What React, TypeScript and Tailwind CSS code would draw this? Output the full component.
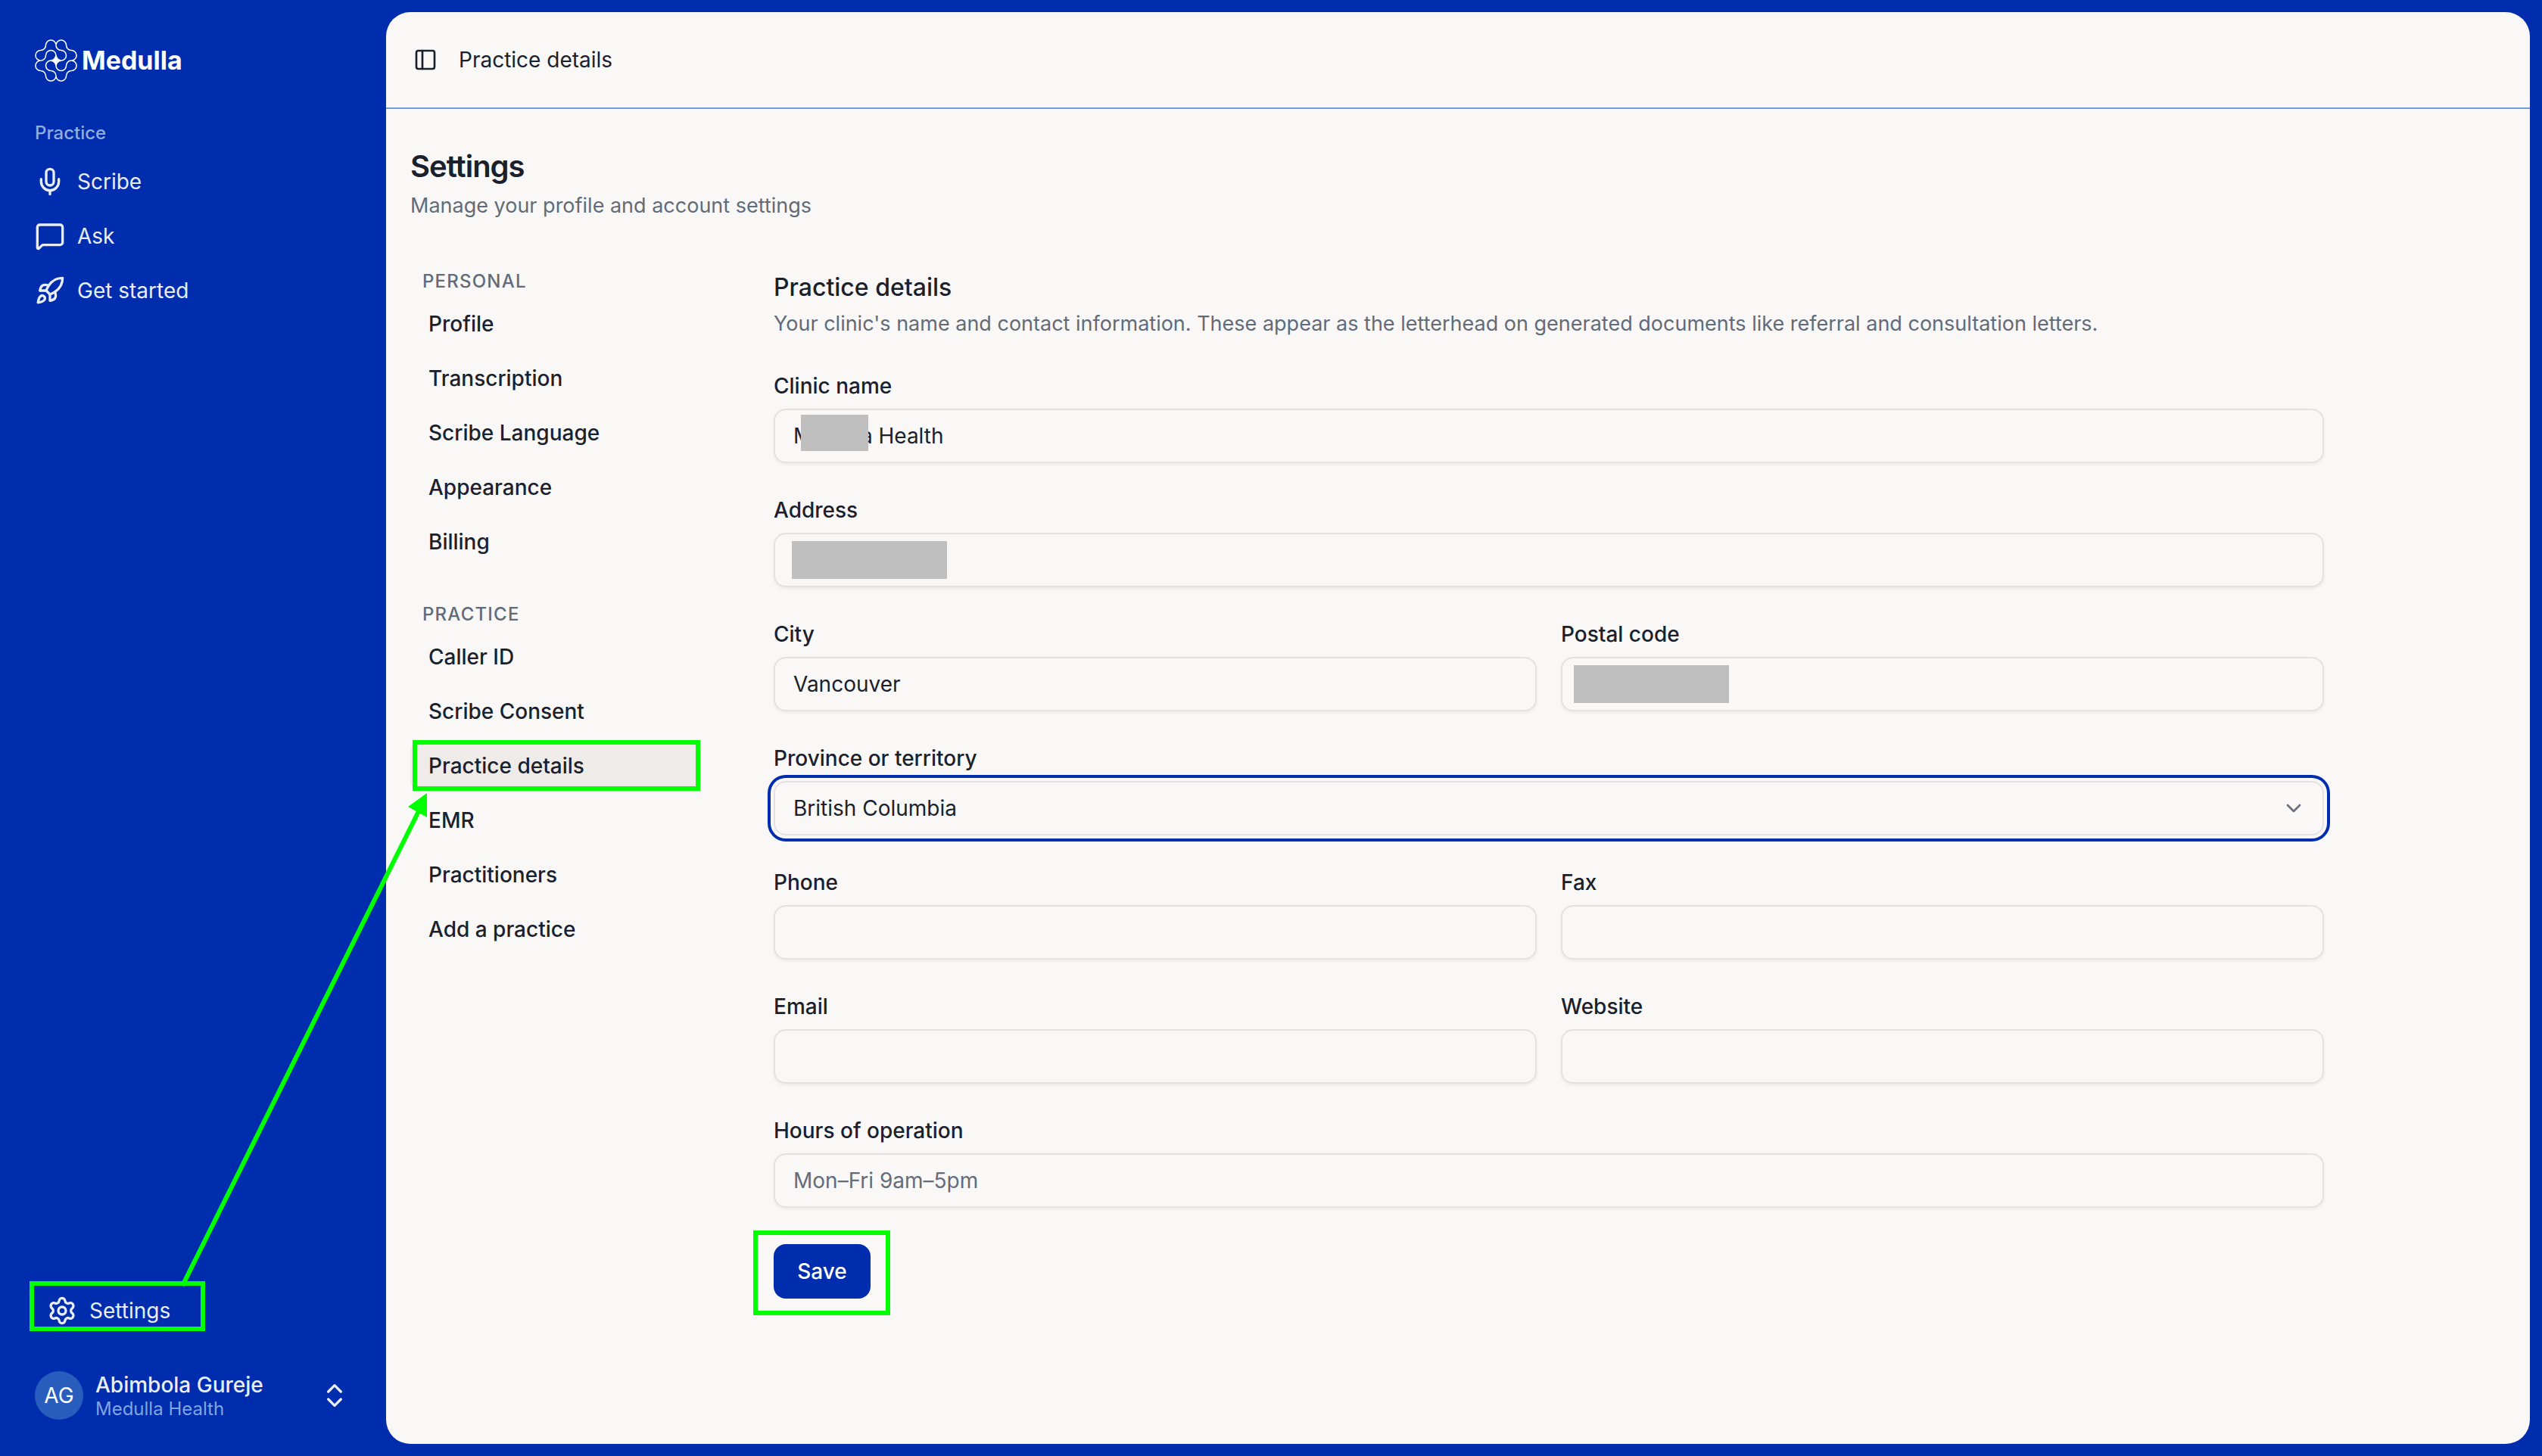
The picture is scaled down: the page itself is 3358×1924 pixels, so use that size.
import type { ReactNode } from 'react';
import {
  ChevronDown,
  ChevronsUpDown,
  MessageSquare,
  Mic,
  PanelLeft,
  Rocket,
  Settings,
} from 'lucide-react';

const mainLinks = [
  { label: 'Scribe', icon: Mic },
  { label: 'Ask', icon: MessageSquare },
  { label: 'Get started', icon: Rocket },
];

const settingsGroups = [
  {
    title: 'Personal',
    items: ['Profile', 'Transcription', 'Scribe Language', 'Appearance', 'Billing'],
  },
  {
    title: 'Practice',
    items: [
      'Caller ID',
      'Scribe Consent',
      'Practice details',
      'EMR',
      'Practitioners',
      'Add a practice',
    ],
  },
];

function LogoMark() {
  return (
    <svg viewBox="-1 -1 58 58" className="size-14 shrink-0" fill="none" stroke="white" strokeWidth="1.6" aria-hidden="true">
      <path d="M14 7a7 7 0 0 1 14 0a7 7 0 0 1 14 0a7 7 0 0 0 7 7a7 7 0 0 1 0 14a7 7 0 0 1 0 14a7 7 0 0 0 -7 7a7 7 0 0 1 -14 0a7 7 0 0 1 -14 0a7 7 0 0 0 -7 -7a7 7 0 0 1 0 -14a7 7 0 0 1 0 -14a7 7 0 0 0 7 -7z" />
      {[0, 90, 180, 270].map((angle) => (
        <path key={angle} d="M28 7a7 7 0 0 0 7 7a7 7 0 0 1 0 14" transform={`rotate(${angle} 28 28)`} />
      ))}
      <path d="M28 21Q29 27 35 28Q29 29 28 35Q27 29 21 28Q27 27 28 21z" fill="white" />
    </svg>
  );
}

function Sidebar() {
  return (
    <aside className="flex w-[510px] shrink-0 flex-col pt-[52px] pr-12 pb-12 pl-[46px] text-[#e8edf6]">
      <div className="flex h-14 items-center gap-1.5 text-white">
        <LogoMark />
        <span className="text-[34px] leading-10 font-bold">Medulla</span>
      </div>
      <p className="mt-[52px] text-2xl leading-8 font-medium text-[#8eaee0]">Practice</p>
      <nav className="mt-4 flex flex-col gap-2">
        {mainLinks.map(({ label, icon: Icon }) => (
          <a key={label} href="#" className="flex h-16 items-center gap-4">
            <Icon className="size-10" />
            {label}
          </a>
        ))}
      </nav>
      <div className="mt-auto flex flex-col gap-12">
        <a href="#" className="relative flex h-16 items-center gap-4 px-4">
          <Settings className="size-10" />
          Settings
          <span className="absolute -top-[7px] -left-[7px] h-[66px] w-[232px] border-6 border-[#00ff00]" />
        </a>
        <button type="button" className="flex items-center gap-4 text-left">
          <span className="flex size-16 items-center justify-center rounded-full bg-[#285dbd] text-white">AG</span>
          <span className="flex flex-1 flex-col">
            <span className="leading-9 font-medium">Abimbola Gureje</span>
            <span className="text-2xl leading-7 text-[#7fa5de]">Medulla Health</span>
          </span>
          <ChevronsUpDown className="size-10" />
        </button>
      </div>
    </aside>
  );
}

function SettingsNav() {
  return (
    <nav className="flex w-96 shrink-0 flex-col gap-12">
      {settingsGroups.map((group) => (
        <div key={group.title} className="flex flex-col gap-2">
          <h3 className="px-4 text-2xl leading-8 font-medium tracking-wider text-[#626b79] uppercase">{group.title}</h3>
          {group.items.map((item) =>
            item === 'Practice details' ? (
              <a key={item} href="#" aria-current="page" className="relative flex h-16 items-center rounded-xl bg-[#efebe8] px-6 font-medium">
                {item}
                <span className="absolute -top-0.5 left-[3px] h-[67px] w-[380px] border-6 border-[#00ff00]" />
              </a>
            ) : (
              <a key={item} href="#" className="flex h-16 items-center rounded-xl px-6 font-medium">
                {item}
              </a>
            ),
          )}
        </div>
      ))}
    </nav>
  );
}

const controlClass =
  'h-[72px] w-full rounded-2xl border-2 border-[#e3e2e0] bg-[#f9f8f6] px-6 placeholder:text-[#646c7a] placeholder:opacity-100 outline-none';

type FieldProps = {
  id: string;
  label: string;
  value?: string;
  placeholder?: string;
  children?: ReactNode;
};

function Field({ id, label, value, placeholder, children }: FieldProps) {
  return (
    <div className="flex min-w-0 flex-1 flex-col gap-4">
      <label htmlFor={id} className="leading-7 font-medium">
        {label}
      </label>
      <div className="relative">
        <input id={id} type="text" defaultValue={value} placeholder={placeholder} className={`${controlClass} shadow-[0_2px_4px_rgba(0,0,0,0.06)]`} />
        {children}
      </div>
    </div>
  );
}

function PracticeForm() {
  return (
    <form className="flex max-w-[2048px] min-w-0 flex-1 flex-col gap-12">
      <div className="flex flex-col gap-1">
        <h2 className="text-[32px] leading-[48px] font-medium">Practice details</h2>
        <p className="text-[27px] leading-10 text-[#626b79]">
          Your clinic's name and contact information. These appear as the letterhead on generated documents like referral and consultation letters.
        </p>
      </div>
      <Field id="clinic" label="Clinic name" value="Medulla Health">
        <span className="absolute top-2 left-9 h-12 w-[89px] bg-[#bfbfbf]" />
      </Field>
      <Field id="address" label="Address">
        <span className="absolute top-[11px] left-6 h-[50px] w-[205px] bg-[#bfbfbf]" />
      </Field>
      <div className="flex gap-8">
        <Field id="city" label="City" value="Vancouver" />
        <Field id="postal" label="Postal code">
          <span className="absolute top-[11px] left-[17px] h-[50px] w-[205px] bg-[#bfbfbf]" />
        </Field>
      </div>
      <div className="flex flex-col gap-4">
        <label htmlFor="province" className="leading-7 font-medium">
          Province or territory
        </label>
        <div className="relative">
          <select id="province" defaultValue="British Columbia" className={`${controlClass} appearance-none ring-4 ring-[#002dae] ring-offset-4 ring-offset-[#f9f8f6]`}>
            <option>Alberta</option>
            <option>British Columbia</option>
            <option>Ontario</option>
          </select>
          <ChevronDown className="pointer-events-none absolute top-5 right-6 size-8 text-[#697180]" />
        </div>
      </div>
      <div className="flex gap-8">
        <Field id="phone" label="Phone" />
        <Field id="fax" label="Fax" />
      </div>
      <div className="flex gap-8">
        <Field id="email" label="Email" />
        <Field id="website" label="Website" />
      </div>
      <Field id="hours" label="Hours of operation" placeholder="Mon–Fri 9am–5pm" />
      <div className="relative self-start">
        <button type="submit" className="h-[72px] w-32 rounded-2xl bg-[#002dae] font-medium text-white">
          Save
        </button>
        <span className="pointer-events-none absolute -top-[18px] -left-[27px] h-28 w-[181px] border-6 border-[#00ff00]" />
      </div>
    </form>
  );
}

function Arrow() {
  return (
    <svg viewBox="0 0 340 660" className="pointer-events-none absolute top-[1044px] left-[232px] h-[660px] w-[340px]" aria-hidden="true">
      <line x1="9" y1="655" x2="322" y2="26" stroke="#00ff00" strokeWidth="6" />
      <path d="M332 4L307 22L332 36z" fill="#00ff00" />
    </svg>
  );
}

export default function App() {
  return (
    <div className="relative flex min-h-screen bg-[#002dae] font-['Inter',sans-serif] text-[28px] leading-10 text-[#1a212d]">
      <Sidebar />
      <main className="my-4 mr-4 flex min-w-0 flex-1 flex-col rounded-[32px] bg-[#f9f8f6]">
        <header className="flex h-32 items-center gap-7 border-b-2 border-[#6e9fd8] px-9">
          <button type="button" aria-label="Toggle sidebar">
            <PanelLeft className="size-8" />
          </button>
          <span>Practice details</span>
        </header>
        <div className="flex flex-col gap-16 px-8 py-12">
          <div className="flex flex-col gap-1">
            <h1 className="text-[40px] leading-[56px] font-semibold tracking-tight">Settings</h1>
            <p className="text-[27px] leading-10 text-[#626b79]">Manage your profile and account settings</p>
          </div>
          <div className="flex gap-24">
            <SettingsNav />
            <PracticeForm />
          </div>
        </div>
      </main>
      <Arrow />
    </div>
  );
}
